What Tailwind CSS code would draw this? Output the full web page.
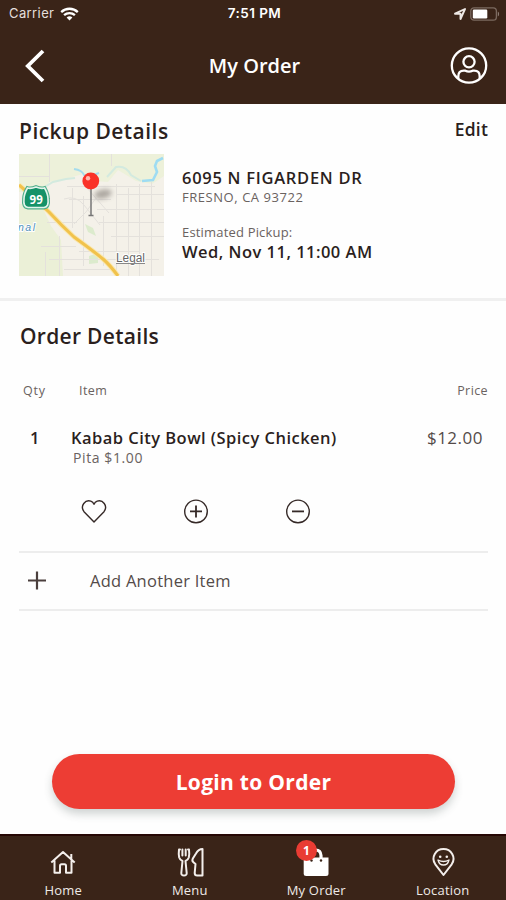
<!DOCTYPE html>
<html lang="en">
<head>
<meta charset="utf-8">
<meta name="viewport" content="width=device-width, initial-scale=1">
<title>My Order</title>
<script src="https://cdn.jsdelivr.net/npm/@tailwindcss/browser@4"></script>
</head>
<body class="flex h-[900px] w-[506px] flex-col overflow-hidden bg-[#fefefe] font-['Open_Sans','Noto_Sans',sans-serif] text-[#2b1f1d] whitespace-nowrap">

<header class="flex h-[104px] shrink-0 flex-col bg-[#3a2418] text-white">
  <div class="grid h-[27px] grid-cols-3 items-center pr-[6px] pl-[9px] font-[Inter,sans-serif] text-[13px]">
    <div class="flex items-center gap-[6px] text-[#e4dfdc]">
      <span class="tracking-[0.4px]">Carrier</span>
      <svg class="h-[14px] w-[19px]" viewBox="0 0 19 14" fill="none" stroke="#fff" stroke-width="2.3"><path d="M1.2 5.1a12 12 0 0 1 16.6 0M4.1 8.2a7.8 7.8 0 0 1 10.8 0"/><path d="M9.5 13.4 6.6 10.6a4.2 4.2 0 0 1 5.8 0z" fill="#fff" stroke="none"/></svg>
    </div>
    <span class="text-center text-[13.5px] font-semibold tracking-[0.45px]">7:51 PM</span>
    <div class="flex items-center justify-end gap-[4px]">
      <svg class="h-[12px] w-[12px]" viewBox="0 0 12 12" fill="none" stroke="#eee8e5" stroke-width="1.9" stroke-linejoin="round"><path d="M1 5.7 11 1 6.5 11V5.7z"/></svg>
      <svg class="h-[14px] w-[30px]" viewBox="0 0 30 14"><rect x=".8" y=".8" width="25.6" height="12.4" rx="3.2" fill="none" stroke="#7b695f" stroke-width="1.3"/><rect x="2.8" y="2.6" width="14.5" height="8.8" rx="1.2" fill="#fff"/><path d="M27.8 4.5a3 3 0 0 1 0 5z" fill="#8b7b72"/></svg>
    </div>
  </div>
  <div class="grid h-[77px] grid-cols-3 items-center pr-[18px] pl-[25px]">
    <svg class="h-[34px] w-[20px]" viewBox="0 0 20 34" fill="none" stroke="#fff" stroke-width="3.8"><path d="M18 2 2.8 17 18 32"/></svg>
    <h1 class="pr-1 text-center text-[20px] font-semibold">My Order</h1>
    <svg class="h-[38px] w-[38px] justify-self-end" viewBox="0 0 38 38" fill="none" stroke="#fff" stroke-width="2.3"><circle cx="19" cy="18.5" r="17.2"/><circle cx="19" cy="14.800" r="5.6"/><path d="M8.3 31.500v-2.200q0-5.600 5.500-5.600h1.600q3.600 1.800 7.200 0h1.600q5.500 0 5.500 5.600v2.200"/></svg>
  </div>
</header>

<section class="h-[197px] shrink-0 border-b-[3px] border-[#f0f0f0] pt-[12px] pr-[18px] pl-[19px]">
  <div class="flex h-[38px] items-start justify-between">
    <h2 class="text-[21px] leading-[31px] font-semibold tracking-[0.47px]">Pickup Details</h2>
    <a class="text-[17.5px] leading-[27px] font-semibold tracking-[0.2px]">Edit</a>
  </div>
  <div class="flex gap-[18px]">
    <svg class="h-[122px] w-[145px]" viewBox="0 0 145 122">
      <defs>
        <filter id="soft" x="-50%" y="-50%" width="200%" height="200%"><feGaussianBlur stdDeviation="2.6"/></filter>
      </defs>
      <rect width="145" height="122" fill="#f4f1e9"/>
      <path d="M0 0h145v22l-12 8-16-3-18-11-10 12-13-1-12-7-14 4-20 4-4 10H0z" fill="#edf1da"/>
      <path d="M0 50h22l10 22 10 14 2 36H0z" fill="#ebf0d7"/>
      <path d="M66 70l8 4 3 8-8-4zM70 102l9-3v10l-9 1z" fill="#dcebcd"/>
      <g fill="none" stroke="#e4e1dc" stroke-width="1">
        <path d="M30.500 0v28M0 22.500h30M92.500 0v12M48 32.500h88M50 45.500h42M78 55.500h67M28 68.500h30M80 68.500h65M92 82.500h53M22 92.500h35M60 97.500h60M30 105.500h110M45 115.500h50M84.500 62v50M97.500 30v92M109.500 34v88M120.500 30v92M132.500 28v94M53.500 34v40M64.500 42v70M40.500 82v40M26.500 98v24M98 40.500h47"/>
        <path d="M45 45q12-4 20 6l16 20M55 70l12-12 10-14M68 34l22 25"/>
      </g>
      <path d="M24 34 34 28 47 25 56 24M88 23 97 13q10-2 15 8l10 6" fill="none" stroke="#d3eadf" stroke-width="2"/>
      <path d="M55 15q8 1 10 6l6 2M74 21l6-2" fill="none" stroke="#a5dced" stroke-width="2"/>
      <path d="M144 4l-6 3-2 5 2 6-4 8-11 1" fill="none" stroke="#9edcf2" stroke-width="2.6"/>
      <path d="M0 31q16 13 30 27 12 13 25 25 18 13 29 22 7 6 15 17" fill="none" stroke="#f9e7ae" stroke-width="5"/>
      <path d="M0 31q16 13 30 27 12 13 25 25 18 13 29 22 7 6 15 17" fill="none" stroke="#f1c24b" stroke-width="3"/>
      <path d="M17 34q5 2 8.500 1 3.500 6 3.500 11 1 8-4 8.500H9q-5-.500-4-8.500 0-5 3.500-11 3.500 1 8.500-1z" transform="translate(0 -1)" fill="none" stroke="#4fae8a" stroke-width="3.800"/>
      <path d="M17 34q5 2 8.500 1 3.500 6 3.500 11 1 8-4 8.500H9q-5-.500-4-8.500 0-5 3.500-11 3.500 1 8.500-1z" transform="translate(0 -1)" fill="#159268" stroke="#e4f5ed" stroke-width="1.600"/>
      <text x="17.2" y="50" text-anchor="middle" font-family="Open Sans" font-weight="700" font-size="11.500" fill="#fff">99</text>
      <text x="-1" y="77" font-family="Liberation Sans" font-style="italic" font-size="10.5" textLength="17" fill="#4f90bb" stroke="#fff" stroke-width="2" paint-order="stroke">nal</text>
      <text x="97" y="108" font-family="Liberation Sans" font-size="12" textLength="29" fill="#666" stroke="#fff" stroke-width="2" paint-order="stroke">Legal</text>
      <path d="M97 109.5h29" stroke="#888"/>
      <ellipse cx="84" cy="40" rx="9" ry="4.5" transform="rotate(-12 84 40)" fill="#665f5a" opacity=".5" filter="url(#soft)"/>
      <path d="M72 34v27M69.500 61.500h5" stroke="#777" stroke-width="1.5"/>
      <circle cx="71.8" cy="27" r="8.4" fill="#fa3228"/>
      <circle cx="69" cy="24.3" r="2.2" fill="#ffb7ad"/>
    </svg>
    <div class="pt-[13px]">
      <p class="text-[16.5px] leading-[22px] font-semibold tracking-[0.72px]">6095 N FIGARDEN DR</p>
      <p class="text-[13px] leading-[16px] tracking-[0.55px] text-[#6a6260]">FRESNO, CA 93722</p>
      <p class="mt-[19px] text-[13px] leading-[17px] tracking-[0.18px] text-[#6a6260]">Estimated Pickup:</p>
      <p class="text-[16.5px] leading-[22px] font-semibold tracking-[0.48px]">Wed, Nov 11, 11:00 AM</p>
    </div>
  </div>
</section>

<main class="flex-1 pt-[20px] pr-[18px] pl-[19px]">
  <h2 class="pl-px text-[21px] leading-[31px] font-semibold tracking-[0.3px]">Order Details</h2>
  <div class="mt-[28px] flex h-[22px] items-center pl-[4px] text-[12.5px] tracking-[0.4px] text-[#6a6260]">
    <span class="w-[56px] tracking-[0.8px]">Qty</span><span class="flex-1">Item</span><span>Price</span>
  </div>
  <div class="mt-[24px] flex h-[42px] leading-[24px]">
    <span class="w-[52px] pl-[11px] text-[16.5px] font-semibold">1</span>
    <div class="flex-1">
      <p class="text-[16.5px] font-semibold tracking-[0.46px]">Kabab City Bowl (Spicy Chicken)</p>
      <p class="pl-[2px] text-[14px] leading-[16px] tracking-[0.6px] text-[#6a6260]">Pita $1.00</p>
    </div>
    <span class="pr-[5px] text-[17px] tracking-[0.5px] text-[#544b49]">$12.00</span>
  </div>
  <div class="mt-[30px] flex h-[26px] items-center gap-[76px] pl-[62px]">
    <svg class="h-[26px] w-[26px]" viewBox="0 0 26 26" fill="none" stroke="#352927" stroke-width="1.4" stroke-linejoin="round"><path d="M13 24 3 13.7C-1.400 7.500 4.500 1.500 9.800 3.200Q12 4 13 6.300 14 4 16.200 3.200C21.500 1.500 27.400 7.500 23 13.700z"/></svg>
    <svg class="h-[26px] w-[26px]" viewBox="0 0 26 26" fill="none" stroke="#352927" stroke-width="1.4"><circle cx="13" cy="13.400" r="11.300"/><path d="M7 13.400h12M13 7.400v12" stroke-width="1.800"/></svg>
    <svg class="h-[26px] w-[26px]" viewBox="0 0 26 26" fill="none" stroke="#352927" stroke-width="1.4"><circle cx="13" cy="13.400" r="11.300"/><path d="M7 13.400h12" stroke-width="1.800"/></svg>
  </div>
  <div class="mt-[27px] flex h-[60px] items-center border-y-2 border-[#ededed] pl-[8px]">
    <svg class="h-[20px] w-[20px]" viewBox="0 0 20 20" stroke="#4b3f3d" stroke-width="2.200"><path d="M1 9.500h18M10 .500v18"/></svg>
    <span class="pl-[43px] text-[16.5px] tracking-[0.25px] text-[#544b49]">Add Another Item</span>
  </div>
</main>

<button class="mr-[51px] mb-[25px] ml-[52px] h-[55px] w-[403px] shrink-0 rounded-full bg-[#ed3d34] pt-[2px] text-[21px] font-bold tracking-[0.3px] text-white shadow-[0_5px_9px_rgba(60,75,70,0.24)]">Login to Order</button>

<nav class="grid h-[66px] shrink-0 grid-cols-4 border-t-2 border-[#260704] bg-[#3a2418] text-[13px] tracking-[0.2px] text-[#efeae7]">
  <a class="flex flex-col items-center pt-[10px]">
    <svg class="h-[32px] w-[32px]" viewBox="0 0 32 32" fill="none" stroke="#f4efec" stroke-width="2" stroke-linejoin="round"><path d="M7.500 14.500v12.200h5.500v-7q0-1.500 1.500-1.500h3q1.500 0 1.500 1.500v7h5.500V14.500M4.300 16.500 16 6 27.700 16.500M24.300 8v5"/></svg>
    <span class="mt-[2px] leading-[20px]">Home</span>
  </a>
  <a class="flex flex-col items-center pt-[10px]">
    <svg class="h-[32px] w-[32px]" viewBox="0 0 32 32" fill="none" stroke="#f4efec" stroke-width="2" stroke-linejoin="round" stroke-linecap="round"><path d="M5 3.500q-.600 5 .200 8 .800 2.500 3.300 3.500L7.300 27q-.100 2.500 2.700 2.500t2.700-2.500L11.500 15q2.500-1 3.300-3.500.800-3 .200-8M8.400 3.500v6M11.700 3.500v6M5 3.500h1M14 3.500h1M28.500 3q-4 0-6.500 4.500l-3.300 5.300q-1 2.200 1 3.700l1.800 1.500-.800 9q0 2.500 2.500 2.500h5.300z"/></svg>
    <span class="mt-[2px] leading-[20px]">Menu</span>
  </a>
  <a class="relative flex flex-col items-center pt-[10px]">
    <svg class="h-[32px] w-[32px]" viewBox="0 0 32 32"><path d="M3.700 11.500h24.800v16q0 2.500-2.500 2.500H6.200q-2.500 0-2.500-2.500z" fill="#fff"/><path d="M11 12V9.500q0-5.500 4.800-5.500T21 9.500V12" fill="none" stroke="#fff" stroke-width="3.200"/><circle cx="11.500" cy="14.500" r="1.200" fill="#3a2418"/><circle cx="21" cy="14.500" r="1.200" fill="#3a2418"/></svg>
    <span class="mt-[2px] leading-[20px]">My Order</span>
    <span class="absolute top-[4px] left-[43px] flex h-[21px] w-[21px] items-center justify-center rounded-full bg-[#e93c33] text-[12px] font-bold text-white">1</span>
  </a>
  <a class="flex flex-col items-center pt-[10px]">
    <svg class="h-[32px] w-[32px]" viewBox="0 0 32 32" fill="none" stroke="#f4efec" stroke-width="2" stroke-linejoin="round"><path d="M16.500 29 8.300 18.300C3.500 11 9 3 16.500 3s13 8 8.200 15.300z"/><path d="M11 14q1.200 5 5.500 5t5.500-5q-5.500 3-11 0z" stroke-width="1.300"/><circle cx="13.200" cy="10.700" r="1.300" fill="#f4efec" stroke="none"/><circle cx="19.800" cy="10.700" r="1.300" fill="#f4efec" stroke="none"/></svg>
    <span class="mt-[2px] leading-[20px]">Location</span>
  </a>
</nav>
</body>
</html>
